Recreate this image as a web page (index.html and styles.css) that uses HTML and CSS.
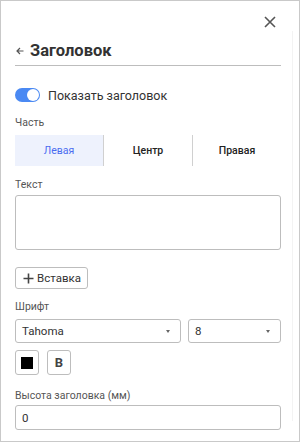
FILE: index.html
```html
<!DOCTYPE html>
<html>
<head>
<meta charset="utf-8">
<link rel="stylesheet" href="styles.css">
</head>
<body>
<div class="panel">
  <div class="topbar">
    <svg class="close" width="12" height="12" viewBox="0 0 12 12"><path d="M1 1L11 11M11 1L1 11" stroke="#555" stroke-width="1.6"/></svg>
  </div>
  <div class="content">
    <div class="title"><svg class="arrow" width="8" height="8" viewBox="0 0 8 8"><path d="M7.5 4H1M4 1L1 4L4 7" fill="none" stroke="#555" stroke-width="1.2"/></svg><span>Заголовок</span></div>
    <div class="toggle-row">
      <span class="toggle"><span class="knob"></span></span>
      <span class="toggle-label">Показать заголовок</span>
    </div>
    <div class="label l-part">Часть</div>
    <div class="seg">
      <div class="seg-item active">Левая</div>
      <div class="seg-item">Центр</div>
      <div class="seg-item">Правая</div>
    </div>
    <div class="label l-text">Текст</div>
    <div class="textarea"></div>
    <button class="insert"><svg width="11" height="11" viewBox="0 0 11 11"><path d="M5.5 0.5V10.5M0.5 5.5H10.5" stroke="#444" stroke-width="1.6"/></svg><span>Вставка</span></button>
    <div class="label l-font">Шрифт</div>
    <div class="selects">
      <div class="select wide"><span>Tahoma</span><span class="caret"></span></div>
      <div class="select narrow"><span>8</span><span class="caret"></span></div>
    </div>
    <div class="style-row">
      <div class="sq"><span class="swatch"></span></div>
      <div class="sq bold">B</div>
    </div>
    <div class="label l-height">Высота заголовка (мм)</div>
    <div class="input">0</div>
  </div>
  <div class="track"></div>
</div>
</body>
</html>
```
FILE: styles.css
```css
html, body { margin: 0; padding: 0; }
body { font-family: Roboto, "Noto Sans", sans-serif; color: #333; background: #fff; }
.panel { position: relative; width: 300px; height: 442px; box-sizing: border-box; border: 1px solid #c9c9c9; }
.topbar { height: 34px; display: flex; justify-content: flex-end; align-items: flex-start; padding: 15px 23px 0 0; box-sizing: border-box; }
.content { padding: 0 18px 0 14px; }
.title { display: flex; align-items: center; gap: 6px; height: 31px; border-bottom: 1px solid #bdbdbd; font-size: 16.5px; font-weight: 700; color: #333; box-sizing: border-box; padding-bottom: 0; }
.arrow { flex: none; margin-left: 1px; margin-top: 1px; }
.toggle-row { display: flex; align-items: center; gap: 8px; margin-top: 22px; height: 14px; }
.toggle { width: 25px; height: 14px; border-radius: 7px; background: #4a89f3; position: relative; flex: none; }
.knob { position: absolute; right: 1px; top: 1px; width: 12px; height: 12px; border-radius: 50%; background: #fff; }
.toggle-label { font-size: 12.5px; color: #333; }
.label { font-size: 10.5px; color: #555; line-height: 12px; }
.l-part { margin-top: 15px; }
.seg { display: flex; margin-top: 6px; height: 31px; }
.seg-item { flex: 1; display: flex; align-items: center; justify-content: center; font-size: 10.5px; font-weight: 500; color: #222; border-left: 1px solid #d0d0d0; margin: 0; }
.seg-item:first-child { border-left: none; }
.seg-item.active { background: #eef2fd; color: #4a6cf0; font-weight: 400; border-right: 1px solid #d0d0d0; }
.seg-item.active + .seg-item { border-left: none; }
.l-text { margin-top: 13px; }
.textarea { margin-top: 4px; height: 55px; border: 1px solid #bdbdbd; border-radius: 3px; box-sizing: border-box; }
.insert { margin-top: 17px; display: flex; align-items: center; gap: 3px; height: 22px; padding: 0 6px 0 7px; border: 1px solid #bdbdbd; border-radius: 3px; background: #fff; font-family: inherit; font-size: 11.5px; color: #333; }
.l-font { margin-top: 12px; }
.selects { display: flex; gap: 7px; margin-top: 6px; }
.select { height: 24px; border: 1px solid #bdbdbd; border-radius: 3px; box-sizing: border-box; display: flex; align-items: center; justify-content: space-between; padding: 0 10px 0 6px; font-size: 11.5px; color: #333; }
.wide { width: 166px; }
.narrow { flex: 1; }
.caret { width: 0; height: 0; border-left: 2.5px solid transparent; border-right: 2.5px solid transparent; border-top: 3px solid #666; }
.style-row { display: flex; gap: 8px; margin-top: 7px; }
.sq { width: 24px; height: 25px; border: 1px solid #bdbdbd; border-radius: 3px; box-sizing: border-box; display: flex; align-items: center; justify-content: center; }
.swatch { width: 12px; height: 12px; background: #000; }
.bold { font-weight: 700; font-size: 13px; color: #444; }
.l-height { margin-top: 15px; }
.input { margin-top: 3px; height: 25px; border: 1px solid #bdbdbd; border-radius: 3px; box-sizing: border-box; display: flex; align-items: center; padding-left: 6px; font-size: 11.5px; color: #333; }
.track { position: absolute; right: 6px; top: 30px; bottom: 20px; width: 1px; background: #f3f3f3; }
```
